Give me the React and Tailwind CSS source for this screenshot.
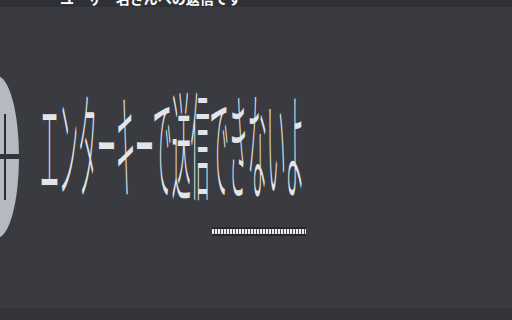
const App = () => {
  return (
    <div
      className="w-[512px] h-[320px] bg-[#3a3b41] flex flex-col overflow-hidden"
      style={{ fontFamily: '"Noto Sans CJK JP", "Noto Sans", sans-serif' }}
    >
      {/* cut-off line above */}
      <div className="h-[7px] bg-[#303136] overflow-hidden">
        <div className="ml-[60px] -mt-[9px] text-[14px] font-bold text-white leading-[14px] whitespace-nowrap">
          ユーザー名さんへの返信です
        </div>
      </div>

      <div className="flex-1 flex">
        <div className="flex flex-col pt-[69px]">
          <div className="w-[44px] h-[162px] -ml-[25px] rounded-[50%] bg-[#b5bac1] relative">
            <div className="absolute left-[29px] top-[38px] w-[2px] h-[86px] bg-[#2b2d31]" />
            <div className="absolute left-[14px] top-[78px] w-[30px] h-[5px] bg-[#34353a]" />
          </div>
        </div>

        <div className="flex flex-col ml-[21px] pt-[81px]">
          <div className="h-[100px] flex items-center">
            <span className="inline-block text-[19px] font-light text-[#e3e5e8] leading-none whitespace-nowrap scale-y-[6.2] origin-center">
              エンターキーで送信できないよ
            </span>
          </div>
          <div className="ml-[172px] mt-[39px] w-[94px] h-[9px] border-y-2 border-[#26272b] bg-[repeating-linear-gradient(90deg,#e8e9ec_0px,#e8e9ec_2px,#4a4b51_2px,#4a4b51_3px)]" />
        </div>
      </div>

      <div className="h-[12px] bg-[#33343a]" />
    </div>
  );
};

export default App;
